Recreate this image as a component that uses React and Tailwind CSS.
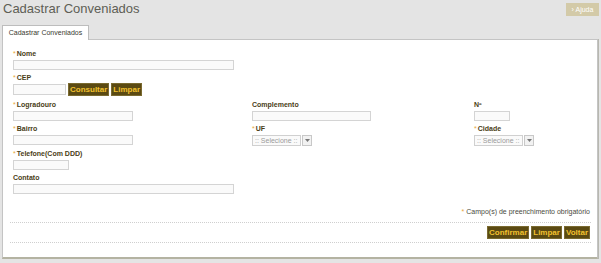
import React from 'react';

const font = { fontFamily: '"Liberation Sans", Arial, sans-serif' };

function Label({ text, required }) {
  return (
    <div className="h-[10px] leading-[10px] text-[7px] font-bold text-[#4a3d16] whitespace-nowrap">
      {required && <span className="text-[#e8a63a] font-normal mr-[1px]">*</span>}
      {text}
    </div>
  );
}

function Input({ w }) {
  return <div className={'h-[10px] mt-[1px] border border-[#d4d4d4] bg-[#fafafa] ' + w} />;
}

function Select() {
  return (
    <div className="flex mt-[1px] h-[11px] items-stretch">
      <div className="w-[49px] border border-[#d0d0d0] bg-[#fafafa] text-[7px] leading-[9px] text-[#9a9a9a] px-[2px] whitespace-nowrap">
        :: Selecione ::
      </div>
      <div className="w-[10px] ml-[1px] border border-[#c8c8c8] bg-[#f2f2f2] flex items-center justify-center">
        <svg width="5" height="3" viewBox="0 0 5 3">
          <path d="M0 0 L5 0 L2.5 3 Z" fill="#777" />
        </svg>
      </div>
    </div>
  );
}

function Button({ children }) {
  return (
    <div className="h-[13px] px-[1px] bg-[#5b4a12] border border-[#7a6a30] text-[#f2c12e] text-[8px] font-bold leading-[11px] whitespace-nowrap">
      {children}
    </div>
  );
}

export default function App() {
  return (
    <div style={font} className="w-[601px] h-[263px] bg-[#e4e4e4] relative overflow-hidden">
      <div className="flex items-start justify-between pl-[3px] pr-[2px] pt-[1px] h-[24px]">
        <div className="text-[13px] leading-[15px] text-[#5e5e55]">Cadastrar Conveniados</div>
        <div className="mt-[2px] h-[13px] w-[33px] bg-[#d3caa8] text-white text-[7px] leading-[13px] text-center">
          › Ajuda
        </div>
      </div>
      <div className="ml-[2px] w-[596px]">
        <div className="flex">
          <div className="h-[15px] w-[87px] border border-b-0 border-[#bdbdbd] bg-white text-[7px] leading-[13px] text-[#3a3a30] text-center relative top-[1px]">
            Cadastrar Conveniados
          </div>
        </div>
        <div className="h-[220px] bg-white border border-[#c4c4c4] border-b-[2px] border-b-[#b4b3a2] shadow-[1px_0_0_#b8b8b0] pl-[10px] pr-[6px] pt-[9px]">
          <div>
            <Label text="Nome" required />
            <Input w="w-[221px]" />
          </div>
          <div className="mt-[3px]">
            <Label text="CEP" required />
            <div className="flex items-center gap-[2px]">
              <div className="h-[11px] w-[53px] border border-[#d4d4d4] bg-[#fafafa]" />
              <Button>Consultar</Button>
              <Button>Limpar</Button>
            </div>
          </div>
          <div className="grid grid-cols-[239px_222px_1fr] mt-[4px] gap-y-[3px]">
            <div>
              <Label text="Logradouro" required />
              <Input w="w-[120px]" />
            </div>
            <div>
              <Label text="Complemento" />
              <Input w="w-[119px]" />
            </div>
            <div>
              <Label text="Nº" />
              <Input w="w-[36px]" />
            </div>
            <div>
              <Label text="Bairro" required />
              <Input w="w-[120px]" />
            </div>
            <div>
              <Label text="UF" required />
              <Select />
            </div>
            <div>
              <Label text="Cidade" required />
              <Select />
            </div>
            <div>
              <Label text="Telefone(Com DDD)" required />
              <Input w="w-[56px]" />
            </div>
            <div />
            <div />
            <div>
              <Label text="Contato" />
              <Input w="w-[221px]" />
            </div>
          </div>
          <div className="mt-[13px] text-right text-[7px] leading-[10px] text-[#4a4a40] pr-[1px]">
            <span className="text-[#e8a63a]">*</span> Campo(s) de preenchimento obrigatório
          </div>
          <div className="mt-[5px] -ml-[3px] border-t border-dotted border-[#cfcfcf]" />
          <div className="flex justify-end gap-[2px] mt-[3px] pr-[1px]">
            <Button>Confirmar</Button>
            <Button>Limpar</Button>
            <Button>Voltar</Button>
          </div>
          <div className="mt-[3px] -ml-[3px] border-t border-dotted border-[#cfcfcf]" />
        </div>
      </div>
    </div>
  );
}
